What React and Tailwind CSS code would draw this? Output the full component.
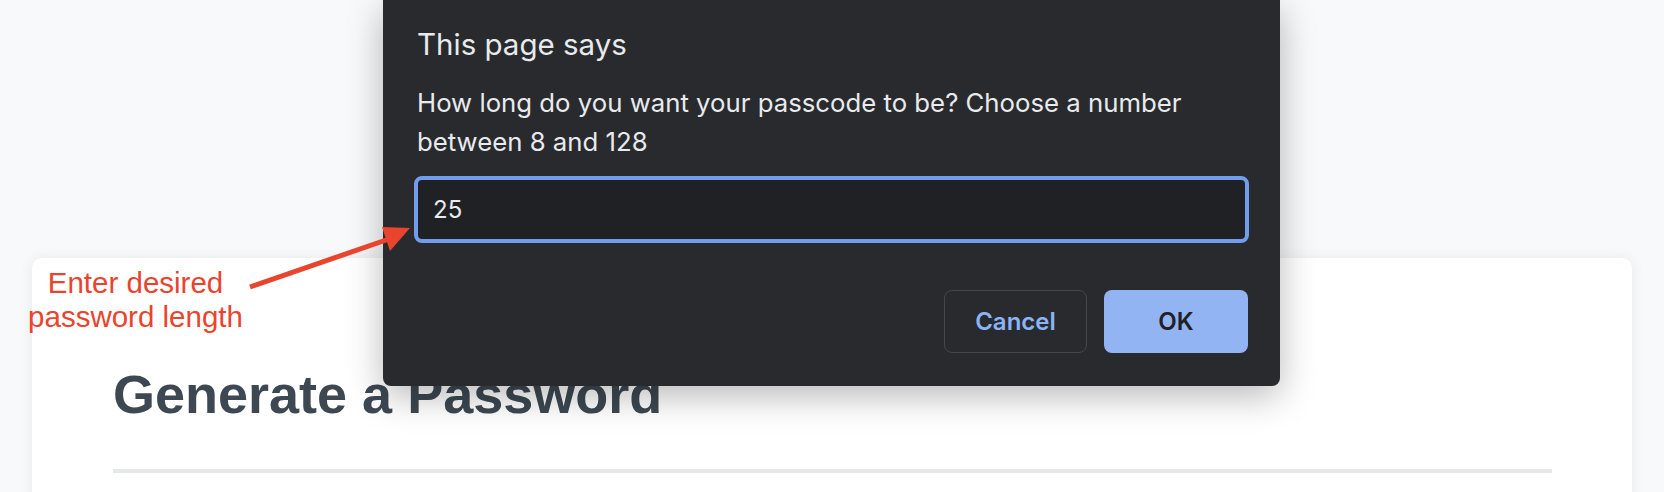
import React from 'react';

function PromptDialog() {
  return (
    <div className="absolute top-0 left-[383px] z-10 w-[897px] rounded-b-[8px] bg-[#292a2d] px-[31px] pb-[33px] shadow-[0_10px_36px_rgba(0,0,0,0.28)] font-['Inter',sans-serif]">
      <div className="mt-[26px] pl-[3px] text-[29.5px] leading-[36px] text-[#e8eaed]">
        This page says
      </div>
      <p className="mt-[21px] pl-[3px] text-[25.75px] leading-[39px] text-[#e8eaed]">
        How long do you want your passcode to be? Choose a number
        <br />
        between 8 and 128
      </p>
      <div className="mt-[15px] flex h-[67px] items-center rounded-[8px] border-4 border-[#729ded] bg-[#202124] pl-[15px] text-[24px] text-[#e8eaed]">
        25
      </div>
      <div className="mt-[47px] flex justify-end gap-[17px]">
        <button className="h-[63px] w-[143px] rounded-[8px] border border-[#45474b] text-[24px] font-semibold text-[#8ab4f8]">
          Cancel
        </button>
        <button className="mr-[1px] h-[63px] w-[144px] rounded-[8px] bg-[#93b4f3] text-[24px] font-semibold text-[#202124]">
          OK
        </button>
      </div>
    </div>
  );
}

function Annotation() {
  return (
    <>
      <div className="absolute left-0 top-[266px] z-20 w-[271px] text-center font-['Liberation_Sans',Arial,sans-serif] text-[29.5px] leading-[34px] text-[#e9442e]">
        Enter desired
        <br />
        password length
      </div>
      <svg className="absolute left-0 top-0 z-20" width="460" height="300" viewBox="0 0 460 300">
        <line x1="250" y1="287" x2="389" y2="239" stroke="#e9442e" strokeWidth="5" />
        <polygon points="382,227 410,228 390,251" fill="#e9442e" />
      </svg>
    </>
  );
}

export default function App() {
  return (
    <div className="relative h-[492px] overflow-hidden bg-[#f8f9fb]">
      <div className="mx-8 mt-[258px] min-h-[300px] rounded-[10px] bg-white pl-[81px] pr-[80px] pt-[106px] shadow-[0_0_14px_rgba(0,0,0,0.07)]">
        <h1 className="font-['Liberation_Sans',Arial,sans-serif] text-[54px] font-bold leading-[60px] text-[#3d4852]">
          Generate a Password
        </h1>
        <div className="mt-[45px] h-[4px] bg-[#e6e7e9]" />
      </div>
      <PromptDialog />
      <Annotation />
    </div>
  );
}
